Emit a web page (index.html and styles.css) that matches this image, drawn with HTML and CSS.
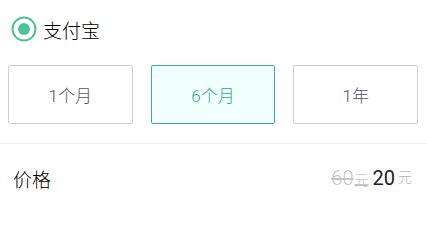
FILE: index.html
```html
<!DOCTYPE html>
<html lang="zh">
<head>
<meta charset="utf-8">
<link rel="stylesheet" href="styles.css">
</head>
<body>
<div class="pay">
  <svg class="radio" width="26" height="26" viewBox="0 0 26 26">
    <circle cx="13" cy="13" r="11.5" fill="none" stroke="#4cc297" stroke-width="2"/>
    <circle cx="13" cy="13" r="6" fill="#4cc297"/>
  </svg>
  <span class="pay-name">支付宝</span>
</div>
<div class="plans">
  <div class="plan">1个月</div>
  <div class="plan active">6个月</div>
  <div class="plan">1年</div>
</div>
<div class="divider"></div>
<div class="price-row">
  <span class="label">价格</span>
  <span class="price">
    <span class="old">60<span class="unit">元</span></span>
    <span class="now">20</span><span class="unit now-unit">元</span>
  </span>
</div>
</body>
</html>
```
FILE: styles.css
```css
html, body {
  margin: 0;
  padding: 0;
  background: #fff;
  font-family: Roboto, "Noto Sans CJK SC", sans-serif;
  font-weight: 300;
}
.pay {
  height: 58px;
  display: flex;
  align-items: center;
  padding-left: 11px;
  gap: 6px;
}
.radio { display: block; }
.pay-name {
  font-size: 19px;
  color: #000;
}
.plans {
  display: flex;
  gap: 18px;
  padding: 7px 9px 0 8px;
}
.plan {
  flex: 1;
  height: 57px;
  border: 1px solid #cfcfd3;
  border-radius: 2px;
  display: flex;
  align-items: center;
  justify-content: center;
  font-size: 17px;
  color: #4f5668;
}
.plan.active {
  border-color: #3aaf9f;
  background: #f1fffd;
  color: #2fa898;
}
.divider {
  margin-top: 19px;
  height: 1px;
  background: #f0f0f0;
}
.price-row {
  height: 68px;
  display: flex;
  align-items: center;
  justify-content: space-between;
  padding: 0 15px 0 13px;
}
.label {
  font-size: 19px;
  color: #000;
}
.price {
  display: flex;
  align-items: baseline;
}
.old {
  font-size: 20px;
  color: #c4c4c4;
  text-decoration: line-through;
  margin-right: 4px;
}
.old .unit { font-size: 14px; margin-left: 1px; }
.now {
  font-size: 20px;
  font-weight: 400;
  color: #222;
}
.now-unit {
  font-size: 14px;
  color: #b5b5b5;
  margin-left: 3px;
  position: relative;
  top: -3px;
}
```
